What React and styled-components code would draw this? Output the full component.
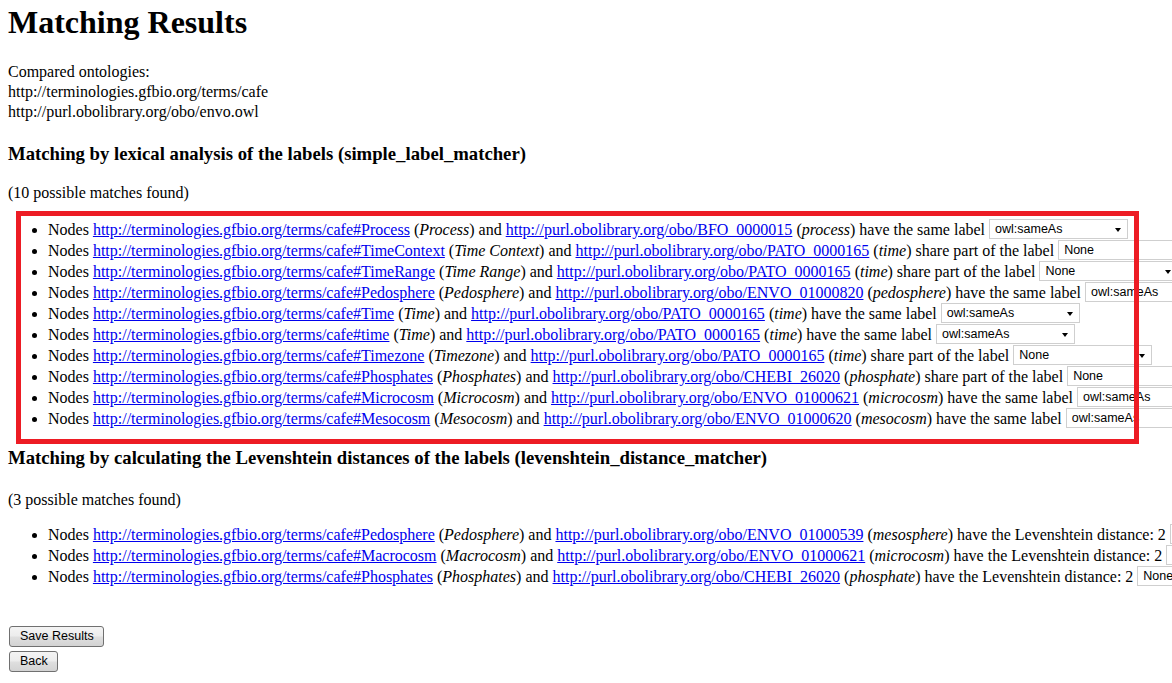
import React from "react";
import styled, { createGlobalStyle } from "styled-components";

const Global = createGlobalStyle`
  html { overflow: hidden; background: #fff; }
  body {
    margin: 0;
    padding: 4px 8px 0 8px;
    font-family: "Liberation Serif", "Times New Roman", serif;
    font-size: 16px;
    color: #000;
  }
`;

const Title = styled.h1`
  margin: 0;
  font-size: 32px;
  line-height: 37px;
  font-weight: bold;
`;

const Para = styled.p`
  margin: ${(p) => p.$top}px 0 0 0;
  line-height: 20px;
  white-space: nowrap;
`;

const SubTitle = styled.h3`
  margin: ${(p) => p.$top}px 0 0 0;
  font-size: 18.72px;
  line-height: 22px;
  font-weight: bold;
  white-space: nowrap;
`;

const Section = styled.div`
  position: relative;
  margin-top: ${(p) => p.$top}px;
`;

const List = styled.ul`
  margin: 0;
  padding-left: 40px;
  list-style: disc;
`;

const Item = styled.li`
  height: 21px;
  line-height: 21px;
  white-space: nowrap;
`;

const Link = styled.a`
  color: #0000ee;
  text-decoration: underline;
`;

const Label = styled.i`
  font-style: italic;
`;

const SelectBox = styled.span`
  display: inline-flex;
  align-items: center;
  justify-content: space-between;
  box-sizing: border-box;
  width: 139px;
  height: 20px;
  margin-left: 4px;
  padding: 1px 6px 0 5px;
  vertical-align: top;
  border: 1px solid #cfcfcf;
  background: #fff;
  font-family: "Liberation Sans", Tahoma, Arial, sans-serif;
  font-size: 12.5px;
  line-height: 17px;
  color: #000;
`;

const Caret = styled.span`
  width: 0;
  height: 0;
  border-left: 3.5px solid transparent;
  border-right: 3.5px solid transparent;
  border-top: 4px solid #000;
`;

const Highlight = styled.div`
  position: absolute;
  left: 8px;
  top: -8px;
  width: 1123px;
  height: 233px;
  box-sizing: border-box;
  border: 5px solid #ed1c24;
  pointer-events: none;
`;

const ButtonStack = styled.div`
  display: flex;
  flex-direction: column;
  align-items: flex-start;
  gap: 4px;
  margin-top: 39px;
  padding-left: 1px;
`;

const Button = styled.button`
  height: 21px;
  padding: 0 9px 0 10px;
  border: 1px solid #707070;
  border-radius: 3px;
  background: linear-gradient(#f4f4f4 0%, #ececec 48%, #dfdfdf 52%, #d3d3d3 100%);
  font-family: "Liberation Sans", Tahoma, Arial, sans-serif;
  font-size: 12.5px;
  color: #000;
  line-height: 19px;
`;

const CAFE = "http://terminologies.gfbio.org/terms/cafe#";
const OBO = "http://purl.obolibrary.org/obo/";

const lexical = [
  ["Process", "Process", "BFO_0000015", "process", "have the same label", "owl:sameAs"],
  ["TimeContext", "Time Context", "PATO_0000165", "time", "share part of the label", "None"],
  ["TimeRange", "Time Range", "PATO_0000165", "time", "share part of the label", "None"],
  ["Pedosphere", "Pedosphere", "ENVO_01000820", "pedosphere", "have the same label", "owl:sameAs"],
  ["Time", "Time", "PATO_0000165", "time", "have the same label", "owl:sameAs"],
  ["time", "Time", "PATO_0000165", "time", "have the same label", "owl:sameAs"],
  ["Timezone", "Timezone", "PATO_0000165", "time", "share part of the label", "None"],
  ["Phosphates", "Phosphates", "CHEBI_26020", "phosphate", "share part of the label", "None"],
  ["Microcosm", "Microcosm", "ENVO_01000621", "microcosm", "have the same label", "owl:sameAs"],
  ["Mesocosm", "Mesocosm", "ENVO_01000620", "mesocosm", "have the same label", "owl:sameAs"],
];

const leven = [
  ["Pedosphere", "Pedosphere", "ENVO_01000539", "mesosphere", "have the Levenshtein distance: 2", "None"],
  ["Macrocosm", "Macrocosm", "ENVO_01000621", "microcosm", "have the Levenshtein distance: 2", "None"],
  ["Phosphates", "Phosphates", "CHEBI_26020", "phosphate", "have the Levenshtein distance: 2", "None"],
];

function MatchRow({ row }) {
  const [a, aLabel, b, bLabel, relation, value] = row;
  return (
    <Item>
      Nodes <Link href="#">{CAFE + a}</Link> (<Label>{aLabel}</Label>) and{" "}
      <Link href="#">{OBO + b}</Link> (<Label>{bLabel}</Label>) {relation}
      <SelectBox>
        <span>{value}</span>
        <Caret />
      </SelectBox>
    </Item>
  );
}

export default function App() {
  return (
    <>
      <Global />
      <Title>Matching Results</Title>
      <Para $top={21}>
        Compared ontologies:
        <br />
        http://terminologies.gfbio.org/terms/cafe
        <br />
        http://purl.obolibrary.org/obo/envo.owl
      </Para>
      <SubTitle $top={21}>Matching by lexical analysis of the labels (simple_label_matcher)</SubTitle>
      <Para $top={18}>(10 possible matches found)</Para>
      <Section $top={16}>
        <List>
          {lexical.map((r, i) => (
            <MatchRow key={i} row={r} />
          ))}
        </List>
        <Highlight />
      </Section>
      <SubTitle $top={18}>
        Matching by calculating the Levenshtein distances of the labels (levenshtein_distance_matcher)
      </SubTitle>
      <Para $top={21}>(3 possible matches found)</Para>
      <Section $top={14}>
        <List>
          {leven.map((r, i) => (
            <MatchRow key={i} row={r} />
          ))}
        </List>
      </Section>
      <ButtonStack>
        <Button>Save Results</Button>
        <Button>Back</Button>
      </ButtonStack>
    </>
  );
}
